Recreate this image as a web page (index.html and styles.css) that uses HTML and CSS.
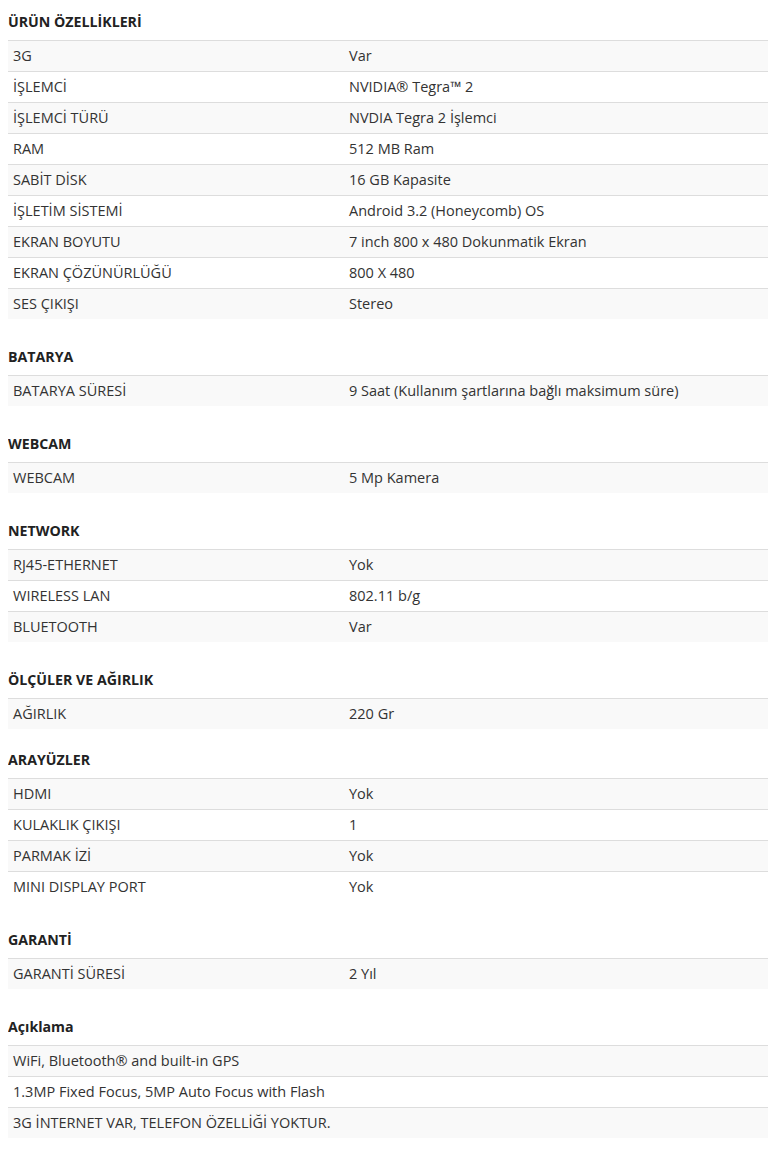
FILE: index.html
```html
<!DOCTYPE html>
<html>
<head>
    <meta charset="utf-8">
    <title>Ürün Özellikleri</title>
    <link rel="stylesheet" href="styles.css">
</head>
<body>
    <div class="spec-group">
        <div class="spec-title">ÜRÜN ÖZELLİKLERİ</div>
        <table class="spec-table">
            <tr><td class="spec-name">3G</td><td>Var</td></tr>
            <tr><td class="spec-name">İŞLEMCİ</td><td>NVIDIA® Tegra™ 2</td></tr>
            <tr><td class="spec-name">İŞLEMCİ TÜRÜ</td><td>NVDIA Tegra 2 İşlemci</td></tr>
            <tr><td class="spec-name">RAM</td><td>512 MB Ram</td></tr>
            <tr><td class="spec-name">SABİT DİSK</td><td>16 GB Kapasite</td></tr>
            <tr><td class="spec-name">İŞLETİM SİSTEMİ</td><td>Android 3.2 (Honeycomb) OS</td></tr>
            <tr><td class="spec-name">EKRAN BOYUTU</td><td>7 inch 800 x 480 Dokunmatik Ekran</td></tr>
            <tr><td class="spec-name">EKRAN ÇÖZÜNÜRLÜĞÜ</td><td>800 X 480</td></tr>
            <tr><td class="spec-name">SES ÇIKIŞI</td><td>Stereo</td></tr>
        </table>
    </div>
    <div class="spec-group">
        <div class="spec-title">BATARYA</div>
        <table class="spec-table">
            <tr><td class="spec-name">BATARYA SÜRESİ</td><td>9 Saat (Kullanım şartlarına bağlı maksimum süre)</td></tr>
        </table>
    </div>
    <div class="spec-group">
        <div class="spec-title">WEBCAM</div>
        <table class="spec-table">
            <tr><td class="spec-name">WEBCAM</td><td>5 Mp Kamera</td></tr>
        </table>
    </div>
    <div class="spec-group">
        <div class="spec-title">NETWORK</div>
        <table class="spec-table">
            <tr><td class="spec-name">RJ45-ETHERNET</td><td>Yok</td></tr>
            <tr><td class="spec-name">WIRELESS LAN</td><td>802.11 b/g</td></tr>
            <tr><td class="spec-name">BLUETOOTH</td><td>Var</td></tr>
        </table>
    </div>
    <div class="spec-group spec-group-tight">
        <div class="spec-title">ÖLÇÜLER VE AĞIRLIK</div>
        <table class="spec-table">
            <tr><td class="spec-name">AĞIRLIK</td><td>220 Gr</td></tr>
        </table>
    </div>
    <div class="spec-group">
        <div class="spec-title">ARAYÜZLER</div>
        <table class="spec-table">
            <tr><td class="spec-name">HDMI</td><td>Yok</td></tr>
            <tr><td class="spec-name">KULAKLIK ÇIKIŞI</td><td>1</td></tr>
            <tr><td class="spec-name">PARMAK İZİ</td><td>Yok</td></tr>
            <tr><td class="spec-name">MINI DISPLAY PORT</td><td>Yok</td></tr>
        </table>
    </div>
    <div class="spec-group">
        <div class="spec-title">GARANTİ</div>
        <table class="spec-table">
            <tr><td class="spec-name">GARANTİ SÜRESİ</td><td>2 Yıl</td></tr>
        </table>
    </div>
    <div class="spec-group">
        <div class="spec-title">Açıklama</div>
        <table class="spec-table">
            <tr><td colspan="2">WiFi, Bluetooth® and built-in GPS</td></tr>
            <tr><td colspan="2">1.3MP Fixed Focus, 5MP Auto Focus with Flash</td></tr>
            <tr><td colspan="2">3G İNTERNET VAR, TELEFON ÖZELLİĞİ YOKTUR.</td></tr>
        </table>
    </div>
</body>
</html>
```

FILE: styles.css
```css
body {
    margin: 11px 0 0 8px;
    background: #fff;
    font-family: "Open Sans", Arial, sans-serif;
    font-size: 14px;
    color: #333;
}
.spec-group {
    margin-bottom: 27px;
}
.spec-group-tight {
    margin-bottom: 20px;
}
.spec-title {
    font-weight: bold;
    font-size: 14.2px;
    line-height: 20px;
    color: #222;
    padding-top: 1px;
    margin-bottom: 8px;
}
.spec-table {
    width: 100%;
    border-collapse: collapse;
}
.spec-table td {
    padding: 5px;
    font-size: 14.5px;
    line-height: 20px;
    border-top: 1px solid #ddd;
    vertical-align: top;
}
.spec-table tr:nth-child(odd) td {
    background: #f9f9f9;
}
.spec-name {
    width: 326px;
}
```
